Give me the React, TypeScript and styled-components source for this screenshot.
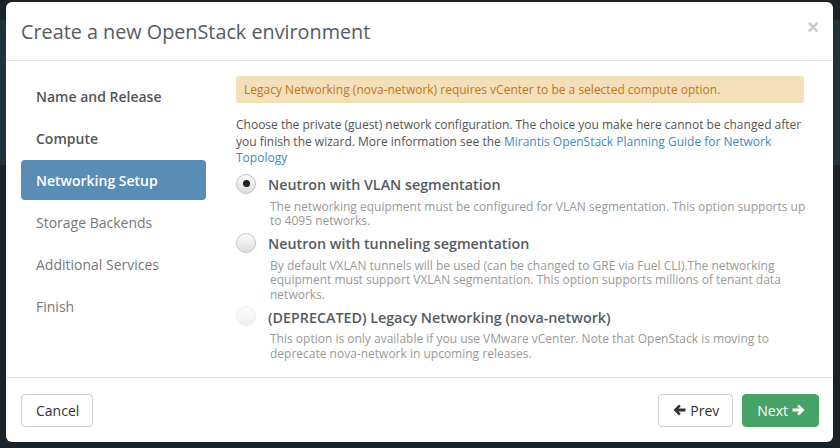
import React from 'react'
import styled, { createGlobalStyle } from 'styled-components'

const GlobalStyle = createGlobalStyle`
  html, body {
    margin: 0;
    padding: 0;
    background: #1b2329;
  }
  body {
    font-family: 'Open Sans', 'Liberation Sans', sans-serif;
  }
`

const Backdrop = styled.div`
  width: 840px;
  height: 448px;
  box-sizing: border-box;
  padding: 2px 7px 6px 6px;
  background: linear-gradient(180deg, #1b2329 0px, #1b2329 20px, #22323d 20px, #22323d 165px, #1b2329 165px);
`

const Modal = styled.div`
  width: 827px;
  height: 440px;
  background: #fff;
  border-radius: 6px;
  display: flex;
  flex-direction: column;
  overflow: hidden;
`

const Header = styled.div`
  height: 58px;
  flex: none;
  display: flex;
  align-items: center;
  justify-content: space-between;
  padding: 0 14px 0 15px;
  border-bottom: 1px solid #e5e5e5;
`

const Title = styled.h4`
  margin: 0;
  font-size: 19.8px;
  font-weight: 400;
  color: #555b61;
`

const Close = styled.span`
  font-family: 'Liberation Sans', Arial, sans-serif;
  font-size: 20px;
  font-weight: 700;
  color: #c8c8c8;
  margin-top: -8px;
`

const Body = styled.div`
  flex: 1;
  display: flex;
  padding: 15px 29px 0 15px;
  gap: 30px;
  border-bottom: 1px solid #e5e5e5;
`

const Nav = styled.ul`
  list-style: none;
  margin: 0;
  padding: 0;
  width: 185px;
  flex: none;
  display: flex;
  flex-direction: column;
  gap: 2px;
`

const NavItem = styled.li<{ $state: 'done' | 'active' | 'todo' }>`
  height: 40px;
  display: flex;
  align-items: center;
  padding-left: 15px;
  border-radius: 4px;
  font-size: 14px;
  font-weight: ${(p) => (p.$state === 'todo' ? 400 : 600)};
  color: ${(p) => (p.$state === 'active' ? '#fff' : p.$state === 'done' ? '#4f565c' : '#777')};
  background: ${(p) => (p.$state === 'active' ? '#5a8db6' : 'transparent')};
`

const Content = styled.div`
  flex: 1;
  min-width: 0;
`

const Alert = styled.div`
  height: 27px;
  box-sizing: border-box;
  display: flex;
  align-items: center;
  padding: 0 8px;
  background: #f3e0b9;
  border-radius: 3px;
  color: #c3761c;
  font-size: 12px;
`

const Intro = styled.p`
  margin: 14px 0 7px;
  font-size: 12px;
  line-height: 16.5px;
  color: #555;

  a {
    color: #3b8cc5;
    text-decoration: none;
  }
`

const Option = styled.label`
  display: block;
  margin-bottom: 4px;
`

const OptionHead = styled.div`
  display: flex;
  align-items: center;
  gap: 12px;
  height: 22px;
`

const Radio = styled.span<{ $checked?: boolean; $disabled?: boolean }>`
  width: 20px;
  height: 20px;
  margin-top: -2px;
  border-radius: 50%;
  flex: none;
  box-sizing: border-box;
  border: 1px solid ${(p) => (p.$disabled ? '#ececec' : '#c4c4c4')};
  background: ${(p) =>
    p.$disabled
      ? 'linear-gradient(180deg, #fbfbfb, #f1f1f1)'
      : 'linear-gradient(180deg, #fafafa, #dedede)'};
  display: flex;
  align-items: center;
  justify-content: center;

  &::after {
    content: '';
    width: 7px;
    height: 7px;
    border-radius: 50%;
    background: #222;
    display: ${(p) => (p.$checked ? 'block' : 'none')};
  }
`

const OptionLabel = styled.span`
  font-size: 14.3px;
  font-weight: 600;
  color: #555b61;
`

const OptionDesc = styled.div`
  margin: 0 -10px 0 34px;
  padding-top: 4px;
  font-size: 12px;
  line-height: 14.5px;
  color: #999;
`

const Footer = styled.div`
  height: 64px;
  flex: none;
  display: flex;
  align-items: center;
  padding: 0 14px 0 15px;
`

const Spacer = styled.div`
  flex: 1;
`

const Button = styled.button<{ $primary?: boolean }>`
  height: 33px;
  box-sizing: border-box;
  padding: 0 13px 0 14px;
  border-radius: 4px;
  border: 1px solid ${(p) => (p.$primary ? '#47a365' : '#ccc')};
  background: ${(p) => (p.$primary ? '#47a365' : '#fff')};
  color: ${(p) => (p.$primary ? '#fff' : '#333')};
  font-family: 'Open Sans', 'Liberation Sans', sans-serif;
  font-size: 14px;
  font-weight: 500;
  display: inline-flex;
  align-items: center;
  gap: 4px;
  & + & {
    margin-left: 9px;
  }
`

const Arrow = ({ dir }: { dir: 'left' | 'right' }) => (
  <svg width="13" height="12" viewBox="0 0 13 12" fill="currentColor">
    {dir === 'left' ? (
      <path d="M0.5 6 L6 0.6 L7.8 2.4 L5.4 4.6 H12.5 V7.4 H5.4 L7.8 9.6 L6 11.4 Z" />
    ) : (
      <path d="M12.5 6 L7 0.6 L5.2 2.4 L7.6 4.6 H0.5 V7.4 H7.6 L5.2 9.6 L7 11.4 Z" />
    )}
  </svg>
)

const steps: { name: string; state: 'done' | 'active' | 'todo' }[] = [
  { name: 'Name and Release', state: 'done' },
  { name: 'Compute', state: 'done' },
  { name: 'Networking Setup', state: 'active' },
  { name: 'Storage Backends', state: 'todo' },
  { name: 'Additional Services', state: 'todo' },
  { name: 'Finish', state: 'todo' },
]

const options = [
  {
    label: 'Neutron with VLAN segmentation',
    desc: 'The networking equipment must be configured for VLAN segmentation. This option supports up to 4095 networks.',
    checked: true,
  },
  {
    label: 'Neutron with tunneling segmentation',
    desc: 'By default VXLAN tunnels will be used (can be changed to GRE via Fuel CLI).The networking equipment must support VXLAN segmentation. This option supports millions of tenant data networks.',
  },
  {
    label: '(DEPRECATED) Legacy Networking (nova-network)',
    desc: 'This option is only available if you use VMware vCenter. Note that OpenStack is moving to deprecate nova-network in upcoming releases.',
    disabled: true,
  },
]

const App = () => {
  return (
    <Backdrop>
      <GlobalStyle />
      <Modal>
        <Header>
          <Title>Create a new OpenStack environment</Title>
          <Close>×</Close>
        </Header>
        <Body>
          <Nav>
            {steps.map((s) => (
              <NavItem key={s.name} $state={s.state}>
                {s.name}
              </NavItem>
            ))}
          </Nav>
          <Content>
            <Alert>Legacy Networking (nova-network) requires vCenter to be a selected compute option.</Alert>
            <Intro>
              Choose the private (guest) network configuration. The choice you make here cannot be changed after
              you finish the wizard. More information see the{' '}
              <a href="#">Mirantis OpenStack Planning Guide for Network Topology</a>
            </Intro>
            {options.map((o) => (
              <Option key={o.label}>
                <OptionHead>
                  <Radio $checked={o.checked} $disabled={o.disabled} />
                  <OptionLabel>{o.label}</OptionLabel>
                </OptionHead>
                <OptionDesc>{o.desc}</OptionDesc>
              </Option>
            ))}
          </Content>
        </Body>
        <Footer>
          <Button>Cancel</Button>
          <Spacer />
          <Button>
            <Arrow dir="left" /> Prev
          </Button>
          <Button $primary>
            Next <Arrow dir="right" />
          </Button>
        </Footer>
      </Modal>
    </Backdrop>
  )
}

export default App
